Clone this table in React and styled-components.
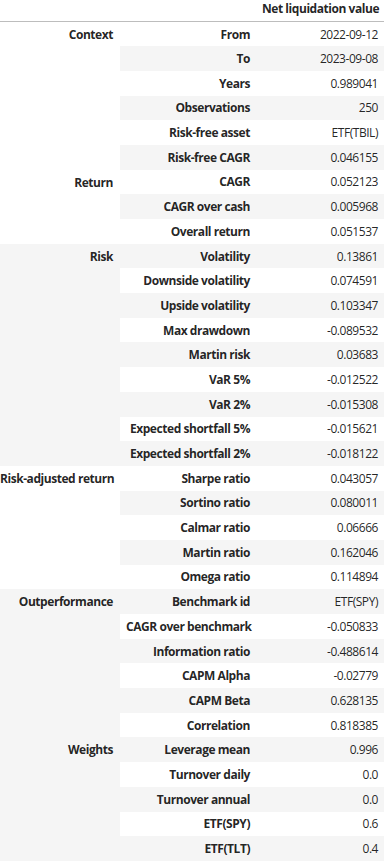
import React from "react";
import styled, { createGlobalStyle } from "styled-components";

const GlobalStyle = createGlobalStyle`
  html, body {
    margin: 0;
    padding: 0;
    background: #ffffff;
  }
  body {
    font-family: "Open Sans", "Liberation Sans", sans-serif;
    color: rgba(0, 0, 0, 0.87);
  }
`;

const Table = styled.table`
  border-collapse: collapse;
  border-spacing: 0;
  table-layout: fixed;
  width: 384px;
  font-size: 12px;
  letter-spacing: -0.45px;
`;

const HeadCell = styled.th`
  height: 16px;
  padding: 0 6px 4px 6px;
  text-align: right;
  font-weight: 700;
  border-bottom: 1px solid #bdbdbd;
  white-space: nowrap;
`;

const Row = styled.tr`
  height: 24.7px;
  background: ${(p) => (p.$striped ? "#f5f5f5" : "#ffffff")};
`;

const GroupCell = styled.th`
  padding: 0 7px 0 0;
  text-align: right;
  vertical-align: top;
  font-weight: 700;
  white-space: nowrap;
  line-height: 25px;
`;

const LabelCell = styled.th`
  padding: 0 6px;
  text-align: right;
  font-weight: 700;
  white-space: nowrap;
`;

const ValueCell = styled.td`
  padding: 0 6px;
  text-align: right;
  white-space: nowrap;
`;

const groups = [
  {
    name: "Context",
    rows: [
      ["From", "2022-09-12"],
      ["To", "2023-09-08"],
      ["Years", "0.989041"],
      ["Observations", "250"],
      ["Risk-free asset", "ETF(TBIL)"],
      ["Risk-free CAGR", "0.046155"],
    ],
  },
  {
    name: "Return",
    rows: [
      ["CAGR", "0.052123"],
      ["CAGR over cash", "0.005968"],
      ["Overall return", "0.051537"],
    ],
  },
  {
    name: "Risk",
    rows: [
      ["Volatility", "0.13861"],
      ["Downside volatility", "0.074591"],
      ["Upside volatility", "0.103347"],
      ["Max drawdown", "-0.089532"],
      ["Martin risk", "0.03683"],
      ["VaR 5%", "-0.012522"],
      ["VaR 2%", "-0.015308"],
      ["Expected shortfall 5%", "-0.015621"],
      ["Expected shortfall 2%", "-0.018122"],
    ],
  },
  {
    name: "Risk-adjusted return",
    rows: [
      ["Sharpe ratio", "0.043057"],
      ["Sortino ratio", "0.080011"],
      ["Calmar ratio", "0.06666"],
      ["Martin ratio", "0.162046"],
      ["Omega ratio", "0.114894"],
    ],
  },
  {
    name: "Outperformance",
    rows: [
      ["Benchmark id", "ETF(SPY)"],
      ["CAGR over benchmark", "-0.050833"],
      ["Information ratio", "-0.488614"],
      ["CAPM Alpha", "-0.02779"],
      ["CAPM Beta", "0.628135"],
      ["Correlation", "0.818385"],
    ],
  },
  {
    name: "Weights",
    rows: [
      ["Leverage mean", "0.996"],
      ["Turnover daily", "0.0"],
      ["Turnover annual", "0.0"],
      ["ETF(SPY)", "0.6"],
      ["ETF(TLT)", "0.4"],
    ],
  },
];

const App = () => {
  let index = 0;
  return (
    <>
      <GlobalStyle />
      <Table>
        <colgroup>
          <col style={{ width: 120 }} />
          <col style={{ width: 136 }} />
          <col style={{ width: 128 }} />
        </colgroup>
        <thead>
          <tr>
            <HeadCell />
            <HeadCell />
            <HeadCell>Net liquidation value</HeadCell>
          </tr>
        </thead>
        <tbody>
          {groups.map((group) =>
            group.rows.map(([label, value], i) => {
              index += 1;
              return (
                <Row key={label + index} $striped={index % 2 === 0}>
                  {i === 0 && (
                    <GroupCell rowSpan={group.rows.length}>{group.name}</GroupCell>
                  )}
                  <LabelCell>{label}</LabelCell>
                  <ValueCell>{value}</ValueCell>
                </Row>
              );
            })
          )}
        </tbody>
      </Table>
    </>
  );
};

export default App;
